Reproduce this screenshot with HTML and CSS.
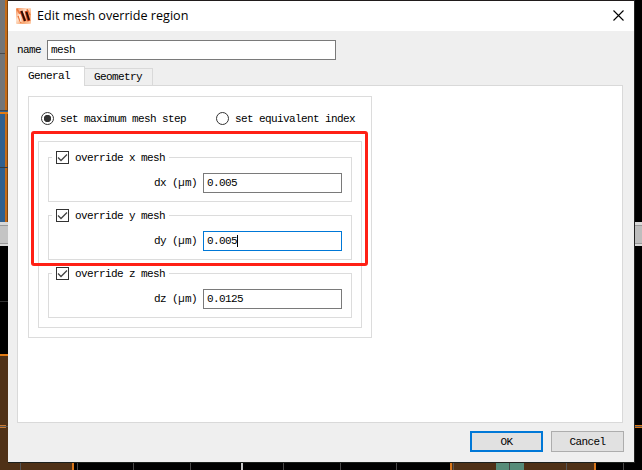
FILE: index.html
```html
<!DOCTYPE html>
<html lang="en">
<head>
<meta charset="utf-8">
<title>Edit mesh override region</title>
<link rel="stylesheet" href="styles.css">
</head>
<body>
<svg class="viewport" width="642" height="470" shape-rendering="crispEdges" aria-hidden="true">
  <rect width="642" height="470" fill="#000"/>
  <rect width="8" height="111" fill="#737577"/>
  <rect y="53" width="8" height="1" fill="#4b4b4b"/>
  <rect x="5" width="2" height="111" fill="#c46c18"/>
  <rect x="7" width="1" height="111" fill="#80440c"/>
  <rect y="110" width="8" height="1" fill="#444"/>
  <rect y="111" width="8" height="111" fill="#30608f"/>
  <rect x="5" y="112" width="2" height="110" fill="#c46c18"/>
  <rect x="7" y="112" width="1" height="110" fill="#80440c"/>
  <rect y="112" width="8" height="2" fill="#e17b14"/>
  <rect y="167" width="8" height="1" fill="#333b44"/>
  <rect y="222" width="8" height="24" fill="#d8d8d8"/>
  <rect y="225" width="8" height="18" fill="#c4c4c4"/>
  <path d="M0 225.500h8M0 243.500h8" stroke="#999"/>
  <rect y="301" width="8" height="1" fill="#333"/>
  <rect y="354" width="8" height="116" fill="#4f3117"/>
  <rect y="354" width="8" height="2" fill="#e17b14"/>
  <rect y="425" width="6" height="3" fill="#c87934"/>
  <rect y="426" width="8" height="1" fill="#555"/>
  <rect x="8" width="626" height="1" fill="#201b1b"/>
  <rect y="462" width="74" height="8" fill="#4f3117"/>
  <rect x="20" y="462" width="1" height="8" fill="#555"/>
  <rect x="72" y="462" width="2" height="8" fill="#d8761a"/>
  <path d="M77.500 462v8M133.500 462v8M190.500 462v8M283.500 462v8M340.500 462v8M396.500 462v8M623.500 462v8" stroke="#484848"/>
  <rect x="241" y="462" width="2" height="8" fill="#c8c8c8"/>
  <rect x="450" y="462" width="146" height="8" fill="#4f3117"/>
  <path d="M451 462v8M595 462v8" stroke="#d8761a" stroke-width="2"/>
  <path d="M453.500 462v8M566.500 462v8" stroke="#555"/>
  <rect x="496" y="462" width="28" height="8" fill="#568c79"/>
  <rect x="509" y="462" width="1" height="8" fill="#444"/>
  <rect x="8" y="462" width="626" height="1" fill="#1c201d"/>
  <rect x="634" y="222" width="8" height="24" fill="#d8d8d8"/>
  <rect x="634" y="225" width="8" height="19" fill="#bdbdbd"/>
  <path d="M634 225.500h8M634 243.500h8" stroke="#999"/>
  <rect x="634" y="425" width="8" height="3" fill="#d8761a"/>
  <rect x="634" y="426" width="8" height="1" fill="#555"/>
  <rect x="634" width="1" height="463" fill="#242424"/>
</svg>
<main class="dialog">
  <header class="titlebar">
    <svg class="logo" width="15" height="16" viewBox="0 0 15 16">
      <defs><linearGradient id="flame" x2="1" y2="1"><stop stop-color="#f58a50"/><stop offset=".4" stop-color="#ffe4cf"/><stop offset=".7" stop-color="#f9a873"/><stop offset="1" stop-color="#ffd2b2"/></linearGradient></defs>
      <rect width="15" height="16" rx="1" fill="url(#flame)"/>
      <path d="M1 1l3 5M2 8l3 7M11 1l3 6" stroke="#ed7a40" stroke-width="1.500"/>
      <path d="M5 3l4 10M10 3l3 10" stroke="#cb3c12" stroke-width="3"/>
      <path d="M5.500 3l3.500 10M10.500 4l2.500 8" stroke="#26100b" stroke-width="1.800"/>
      <path d="M3 6l2 8" stroke="#fff0e2" stroke-width="1"/>
    </svg>
    <h1>Edit mesh override region</h1>
    <svg class="close" width="11" height="11" viewBox="0 0 11 11"><path d="M.5.500l10 10M10.500.500l-10 10" stroke="#000" stroke-width="1.100"/></svg>
  </header>
  <div class="name-row"><span>name</span><div class="field name-field">mesh</div></div>
  <nav class="tabs"><div class="tab active">General</div><div class="tab">Geometry</div></nav>
  <section class="pane">
    <div class="panel">
      <div class="radios">
        <div class="option first"><i class="radio checked"></i><span>set maximum mesh step</span></div>
        <div class="option"><i class="radio"></i><span>set equivalent index</span></div>
      </div>
      <div class="steps">
        <div class="group">
          <div class="legend"><svg width="13" height="13"><rect x=".5" y=".5" width="12" height="12" fill="#fff" stroke="#333"/><path d="M2 6.500l3 3 6-6" fill="none" stroke="#444" stroke-width="1.300"/></svg><span>override x mesh</span></div>
          <div class="value-row"><span>dx (<b>μ</b>m)</span><div class="field">0.005</div></div>
        </div>
        <div class="group">
          <div class="legend"><svg width="13" height="13"><rect x=".5" y=".5" width="12" height="12" fill="#fff" stroke="#333"/><path d="M2 6.500l3 3 6-6" fill="none" stroke="#444" stroke-width="1.300"/></svg><span>override y mesh</span></div>
          <div class="value-row"><span>dy (<b>μ</b>m)</span><div class="field focused">0.005<i class="caret"></i></div></div>
        </div>
        <div class="group">
          <div class="legend"><svg width="13" height="13"><rect x=".5" y=".5" width="12" height="12" fill="#fff" stroke="#333"/><path d="M2 6.500l3 3 6-6" fill="none" stroke="#444" stroke-width="1.300"/></svg><span>override z mesh</span></div>
          <div class="value-row"><span>dz (<b>μ</b>m)</span><div class="field">0.0125</div></div>
        </div>
      </div>
    </div>
  </section>
  <footer class="actions"><div class="button default">OK</div><div class="button">Cancel</div></footer>
</main>
<div class="highlight"></div>
</body>
</html>
```

FILE: styles.css
```css
* { box-sizing: border-box; }
body {
  margin: 0;
  width: 642px;
  height: 470px;
  overflow: hidden;
  padding: 1px 8px 8px;
  background: #000;
  color: #000;
  font: 11px/14px "Liberation Mono", monospace;
  letter-spacing: -0.6px;
}
.viewport { position: absolute; left: 0; top: 0; }
.dialog {
  position: relative;
  display: flex;
  flex-direction: column;
  width: 626px;
  height: 461px;
  background: #efefef;
}
.titlebar {
  display: flex;
  align-items: center;
  height: 30px;
  padding: 0 10px 0 8px;
  background: #fff;
}
.titlebar h1 {
  margin: 0 auto 0 6px;
  font: 12.6px/20px "Open Sans", "Noto Sans", sans-serif;
  letter-spacing: 0;
}
.close { margin-top: -2px; }
.name-row { display: flex; align-items: center; height: 20px; margin: 9px 0 0 9px; }
.name-row span { width: 30px; }
.field {
  display: flex;
  align-items: center;
  width: 139px;
  height: 20px;
  padding-left: 3px;
  border: 1px solid #7a7a7a;
  background: #fff;
}
.name-field { width: 289px; }
.focused { border-color: #0078d7; }
.caret { width: 1px; height: 12px; background: #000; }
.tabs { display: flex; align-items: flex-end; height: 20px; margin: 6px 0 0 9px; position: relative; z-index: 1; }
.tab {
  width: 68px;
  height: 18px;
  padding: 1px 0 0 9px;
  border: 1px solid #d9d9d9;
  border-left: 0;
}
.tab.active {
  width: 68px;
  height: 20px;
  padding: 2px 0 0 10px;
  border-left: 1px solid #d9d9d9;
  border-bottom: 0;
  background: #fff;
}
.pane {
  width: 606px;
  height: 338px;
  margin: -1px 0 0 9px;
  padding: 10px;
  border: 1px solid #d9d9d9;
  background: #fff;
}
.panel { width: 344px; height: 242px; padding: 14px 9px 9px; border: 1px solid #dcdcdc; }
.radios { display: flex; height: 15px; padding-left: 3px; }
.option { display: flex; align-items: center; gap: 6px; white-space: nowrap; }
.option.first { width: 175px; }
.option span { padding-top: 1px; }
.radio { width: 13px; height: 13px; border: 1px solid #333; border-radius: 50%; }
.radio.checked { background: radial-gradient(circle, #333 0 3.400px, #fff 4px); }
.steps { height: 187px; margin-top: 15px; padding: 15px 9px 9px; border: 1px solid #dcdcdc; }
.group { height: 45px; margin-bottom: 13px; padding: 0 9px 0 3px; border: 1px solid #dcdcdc; }
.legend { display: flex; gap: 6px; align-items: center; width: 117px; height: 13px; margin-top: -7px; padding-left: 4px; background: #fff; }
.legend span { white-space: nowrap; }
.value-row { display: flex; align-items: center; justify-content: flex-end; gap: 6px; margin-top: 9px; }
.value-row b { display: inline-block; width: 7px; font: 11px/12px "Open Sans", sans-serif; }
.actions { display: flex; justify-content: flex-end; gap: 8px; padding: 8px 10px 0 0; }
.button {
  display: flex;
  align-items: center;
  justify-content: center;
  width: 73px;
  height: 21px;
  border: 1px solid #adadad;
  background: #e1e1e1;
}
.button.default { border: 2px solid #0078d7; }
.highlight {
  position: absolute;
  left: 31px;
  top: 131px;
  width: 337px;
  height: 135px;
  border: 3px solid #ff2015;
  border-radius: 3px;
}
```
